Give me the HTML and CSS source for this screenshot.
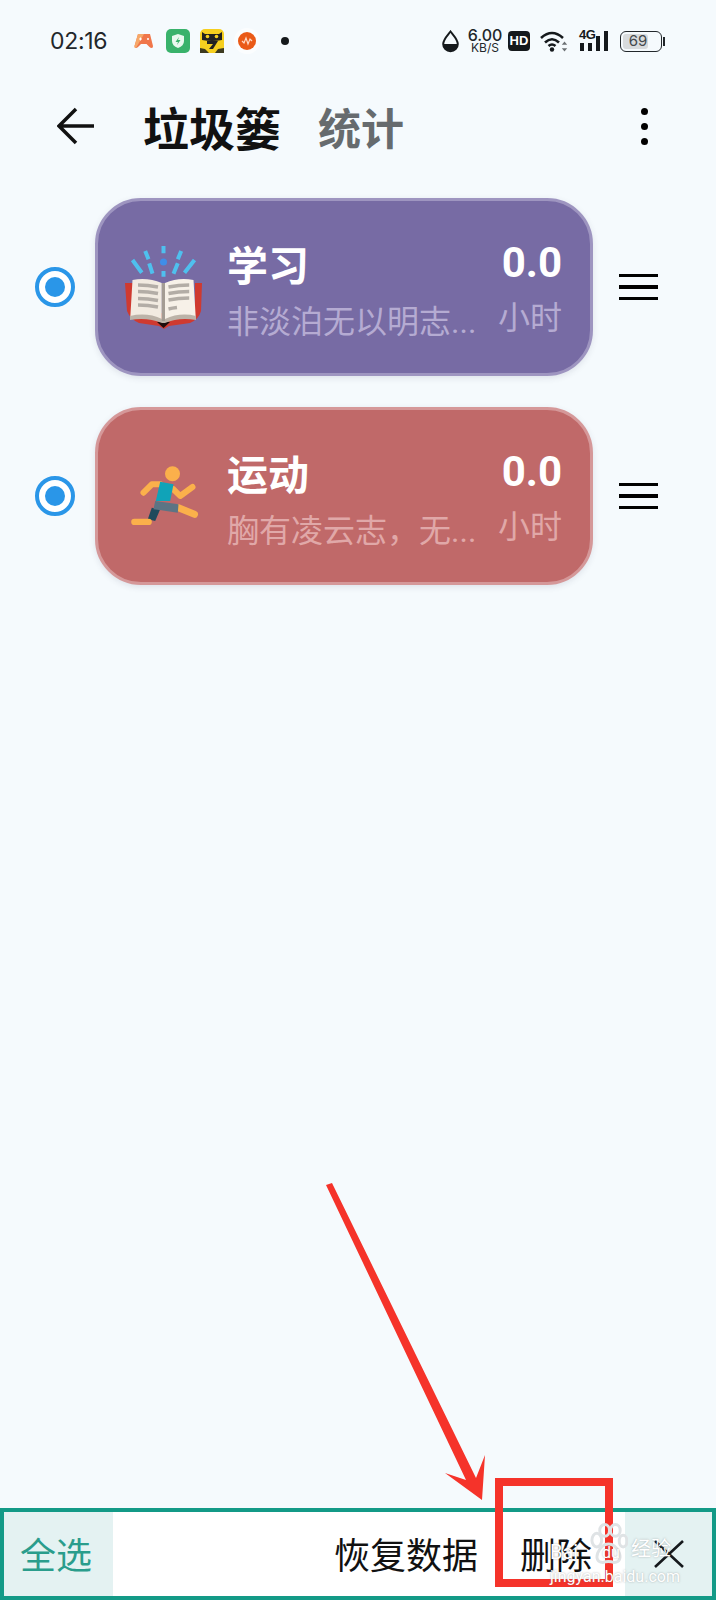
FILE: index.html
```html
<!DOCTYPE html>
<html lang="zh-CN">
<head>
  <meta charset="UTF-8">
  <meta name="viewport" content="width=device-width, initial-scale=1.0">
  <title>垃圾篓</title>
  <link rel="stylesheet" href="styles.css">
</head>
<body>
  <div class="page">
    <!-- status bar -->
    <div class="status-bar">
      <div class="clock">02:16</div>
      <div class="notify-icons">
        <svg class="ic-game" viewBox="0 0 20 16"><path d="M4 1h12l3 12q.3 2-1.500 2-1 0-2-1l-3-3H7l-3 3q-1 1-2 1-1.800 0-1.500-2z" fill="#f0764a"/><path d="M4 1h6L2 15q-1.800 0-1.500-2z" fill="#f6a869"/><path d="M5 6h3M6.500 4.500v3" stroke="#fff" stroke-width="1"/><circle cx="14" cy="6" r="1" fill="#fff"/></svg>
        <svg class="ic-app" viewBox="0 0 24 24"><rect width="24" height="24" rx="5" fill="#39b26b"/><path d="M12 5l6 2v5q0 5-6 7-6-2-6-7V7z" fill="#e8f8ee"/><path d="M13 8l-3.500 5H12l-1 3 3.500-5H12z" fill="#39b26b"/></svg>
        <svg class="ic-app" viewBox="0 0 24 24"><rect width="24" height="24" rx="5" fill="#f6cf1f"/><path d="M2 3l3 2h14l3-2v8q-5 1-10 1T2 11z" fill="#222"/><circle cx="7.500" cy="7.500" r="1.800" fill="#f6cf1f"/><circle cx="16.500" cy="7.500" r="1.800" fill="#f6cf1f"/><path d="M7 12h11l-5 8H9l4-5H7z" fill="#222"/><path d="M0 24v-5l5 1 4 4zM24 24v-5l-6 1-3 4z" fill="#3d3a20"/></svg>
        <svg class="ic-music" viewBox="0 0 26 26"><circle cx="13" cy="13" r="13" fill="#fbfdfe"/><circle cx="13" cy="13" r="9" fill="#ea5a17"/><path d="M8 13l2 2 2-5 2 6 2-5 2 2" fill="none" stroke="#ffd9c4" stroke-width="1.200"/></svg>
        <span class="notify-dot"></span>
      </div>
      <div class="sys-icons">
        <svg class="ic-drop" viewBox="0 0 17 23"><path d="M8.500 1.500C5 6 1.200 9.500 1.200 14a7.300 7.300 0 0 0 14.600 0C15.800 9.500 12 6 8.500 1.500z" fill="none" stroke="#15191c" stroke-width="2"/><path d="M1.500 14h14a7 7 0 0 1-14 0z" fill="#15191c"/></svg>
        <div class="speed"><span class="speed-num">6.00</span><span class="speed-unit">KB/S</span></div>
        <div class="hd">HD</div>
        <svg class="ic-wifi" viewBox="0 0 30 22"><path d="M1 8q11-10 22 0M5 12.500q7-6.500 14 0M8.500 16q3.500-3 7 0" fill="none" stroke="#15191c" stroke-width="2.600"/><circle cx="12" cy="19.500" r="2.200" fill="#15191c"/><path d="M24.500 11.500l2.700 3.200h-5.400zM24.500 21.500l2.700-3.200h-5.400z" fill="#6b7074"/></svg>
        <div class="signal">
          <span class="signal-label">4G</span>
          <svg class="ic-bars" viewBox="0 0 31 22"><rect x="1" y="13" width="4" height="8" fill="#15191c"/><rect x="9" y="13" width="4" height="8" fill="#15191c"/><rect x="17" y="6" width="4" height="15" fill="#15191c"/><rect x="25" y="1" width="4" height="20" fill="#15191c"/></svg>
        </div>
        <div class="battery"><div class="battery-fill"></div><span class="battery-num">69</span></div>
        <span class="battery-tip"></span>
      </div>
    </div>

    <!-- title bar -->
    <div class="nav-bar">
      <svg class="ic-back" viewBox="0 0 38 38"><path d="M37 19H2M19 2L2 19l17 17" fill="none" stroke="#111" stroke-width="3.500"/></svg>
      <div class="nav-title">垃圾篓</div>
      <div class="nav-tab">统计</div>
      <div class="more"><span></span><span></span><span></span></div>
    </div>

    <!-- list -->
    <div class="list">
      <div class="row">
        <div class="radio"></div>
        <div class="card card-study">
          <svg class="card-icon" viewBox="0 0 78 86">
            <path d="M0 39h8v30h62V39h7l-1 28q-2 8-11 12l-21 3-5 3-5-3-20-3q-9-4-12-12z" fill="#cf3a30"/>
            <path d="M32 78h13l-6.500 6z" fill="#1d0d0d"/>
            <path d="M7.500 36q15-3 29.300 3v38q-15-7-31.600-2z" fill="#f2ebe1"/>
            <path d="M68.500 36q-15-3-28.500 3v38q15-7 30.800-2z" fill="#f7f1e8"/>
            <path d="M5 72q17-4 32 3h3q15-7 31-3v4q-17-3-31 3h-3q-15-6-32-3z" fill="#bcb3a8"/>
            <path d="M36.800 39H40v38h-3.200z" fill="#a49c94"/>
            <g stroke="#b3ada6" stroke-width="3.500" fill="none">
              <path d="M13 41q10 0 20 2M13 47.500q10 0 20 2M13 54.500q10 0 20 2M13 61q10 0 20 2"/>
              <path d="M43.500 43q10-2 20.700-2M43.500 49.500q10-2 20.700-2M43.500 56q10-2 20.700-2M43.500 65q4-1 8.500-1.500"/>
            </g>
            <g stroke="#4fc0ee" stroke-width="4" fill="none">
              <path d="M38.500 2v7.300M38.500 27v5.700M20.200 7l3.300 8.300M56.200 7l-3.400 8.300M24.200 19.300l3.300 10.400M52.800 19.300l-4.300 10.400M7.500 16l9.300 12.700M69.500 16l-10 12.700"/>
            </g>
            <circle cx="38.500" cy="18" r="3.500" fill="#3f8ee8"/>
          </svg>
          <div class="card-text">
            <div class="card-name">学习</div>
            <div class="card-desc">非淡泊无以明志...</div>
          </div>
          <div class="card-time">
            <div class="card-hours">0.0</div>
            <div class="card-unit">小时</div>
          </div>
        </div>
        <div class="handle"><span></span><span></span><span></span></div>
      </div>

      <div class="row">
        <div class="radio"></div>
        <div class="card card-sport">
          <svg class="card-icon" viewBox="0 0 78 86">
            <circle cx="47.500" cy="20.700" r="7.500" fill="#fbb04b"/>
            <path d="M18.500 39.700l8.300-8.400h8.400M48.500 36.300l6.700 6.700 12.300-9" fill="none" stroke="#fbb04b" stroke-width="6" stroke-linecap="round" stroke-linejoin="round"/>
            <path d="M35.200 28.700l13.300 2.600L45.200 48H30.800z" fill="#10a3b8"/>
            <path d="M53.500 54.700l16 6.600" fill="none" stroke="#fbb04b" stroke-width="7" stroke-linecap="round"/>
            <path d="M26.800 54.700l8.400 1.600-5 11.700-7.400-1.700z" fill="#1f4a5c"/>
            <path d="M30.200 48l23.300 3.300-.7 8.400-16.600-2.400-7.700-1z" fill="#5c7484"/>
            <rect x="6.200" y="65.700" width="20.600" height="6.300" rx="3.100" fill="#fbb04b"/>
          </svg>
          <div class="card-text">
            <div class="card-name">运动</div>
            <div class="card-desc">胸有凌云志，无...</div>
          </div>
          <div class="card-time">
            <div class="card-hours">0.0</div>
            <div class="card-unit">小时</div>
          </div>
        </div>
        <div class="handle"><span></span><span></span><span></span></div>
      </div>
    </div>

    <!-- bottom actions -->
    <div class="action-bar">
      <div class="select-all">全选</div>
      <div class="actions">
        <span class="restore">恢复数据</span>
        <span class="delete">删除</span>
      </div>
      <div class="close">
        <svg viewBox="0 0 30 28"><path d="M1 1l28 26M29 1L1 27" fill="none" stroke="#15191c" stroke-width="2.600"/></svg>
      </div>
    </div>

    <!-- annotation drawn over the screenshot -->
    <svg class="mark-arrow" viewBox="0 0 170 330"><path d="M1 3l6-2 144 295 9-23-3 45-37-27 21 7z" fill="#f5332a"/></svg>
    <div class="mark-box"></div>
    <div class="watermark">
      <div class="wm-top">
        <span class="wm-bai">Bai</span>
        <svg class="wm-paw" viewBox="0 0 40 44"><g fill="none" stroke="#dfe3e5" stroke-width="3"><ellipse cx="8" cy="17" rx="5" ry="7"/><ellipse cx="16" cy="7" rx="5" ry="6"/><ellipse cx="27" cy="7" rx="5" ry="6"/><ellipse cx="35" cy="18" rx="4" ry="6"/><path d="M20 21q-7 0-11 9-3 9 5 10 6-2 12 0 8-1 5-10-4-9-11-9z"/></g></svg>
        <span class="wm-du">du</span>
        <span class="wm-name">经验</span>
      </div>
      <div class="wm-url">jingyan.baidu.com</div>
    </div>
  </div>
</body>
</html>
```

FILE: styles.css
```css
* {
  box-sizing: border-box;
}

body {
  margin: 0;
  padding: 0;
  background-color: #f5fafd;
  font-family: Roboto, "Noto Sans CJK SC", sans-serif;
  color: #111;
}

.page {
  position: relative;
  display: flex;
  flex-direction: column;
  width: 716px;
  height: 1600px;
  overflow: hidden;
}

/* status bar */
.status-bar {
  display: flex;
  align-items: center;
  height: 82px;
  padding-left: 50px;
}

.clock {
  width: 84px;
  font-family: Inter, sans-serif;
  font-size: 23px;
  letter-spacing: -0.3px;
  color: #22272b;
}

.notify-icons {
  display: flex;
  align-items: center;
}

.ic-game {
  width: 20px;
  height: 16px;
  margin-right: 12px;
}

.ic-app {
  width: 24px;
  height: 24px;
  margin-right: 10px;
}

.ic-music {
  width: 26px;
  height: 26px;
}

.notify-dot {
  width: 8px;
  height: 8px;
  margin-left: 21px;
  border-radius: 50%;
  background-color: #15191c;
}

.sys-icons {
  display: flex;
  align-items: center;
  margin-left: 153px;
}

.ic-drop {
  width: 17px;
  height: 23px;
}

.speed {
  display: flex;
  flex-direction: column;
  align-items: center;
  width: 36px;
  margin-left: 8px;
  font-family: Inter, sans-serif;
  color: #22272b;
}

.speed-num {
  font-size: 16px;
  line-height: 14px;
  font-weight: 500;
}

.speed-unit {
  font-size: 12px;
  line-height: 12px;
}

.hd {
  width: 22px;
  height: 20px;
  margin-left: 5px;
  border-radius: 4px;
  background-color: #15191c;
  color: #fff;
  font-family: "Liberation Sans", sans-serif;
  font-size: 13px;
  font-weight: bold;
  line-height: 20px;
  text-align: center;
}

.ic-wifi {
  width: 30px;
  height: 22px;
  margin-left: 10px;
}

.signal {
  position: relative;
  width: 31px;
  height: 22px;
  margin-left: 9px;
}

.signal-label {
  position: absolute;
  top: -2px;
  left: 0;
  font-family: "Liberation Sans", sans-serif;
  font-size: 13px;
  font-weight: bold;
  letter-spacing: -0.5px;
  line-height: 13px;
  color: #15191c;
}

.ic-bars {
  display: block;
  width: 31px;
  height: 22px;
}

.battery {
  position: relative;
  width: 42px;
  height: 21px;
  margin-left: 10px;
  padding: 2px;
  border: 1.500px solid #22272b;
  border-radius: 6px;
}

.battery-fill {
  width: 69%;
  height: 100%;
  border-radius: 3px;
  background-color: #d8dbdd;
}

.battery-num {
  position: absolute;
  top: 0;
  left: 0;
  width: 34px;
  font-family: Inter, sans-serif;
  font-size: 15px;
  line-height: 18px;
  text-align: center;
  color: #43484c;
}

.battery-tip {
  width: 2px;
  height: 9px;
  margin-left: 1px;
  background-color: #22272b;
}

/* title bar */
.nav-bar {
  display: flex;
  align-items: center;
  height: 88px;
  padding-left: 57px;
}

.ic-back {
  width: 38px;
  height: 38px;
}

.nav-title {
  margin-left: 48px;
  padding-top: 8px;
  font-size: 46px;
  font-weight: bold;
  line-height: 60px;
}

.nav-tab {
  margin-left: 37px;
  padding-top: 8px;
  font-size: 43px;
  font-weight: bold;
  line-height: 60px;
  color: #666b6e;
}

.more {
  display: flex;
  flex-direction: column;
  gap: 8px;
  margin-left: auto;
  margin-right: 68px;
}

.more span {
  width: 7px;
  height: 7px;
  border-radius: 50%;
  background-color: #000;
}

/* list */
.list {
  display: flex;
  flex-direction: column;
  flex: 1;
  gap: 31px;
  padding: 28px 0 0 35px;
}

.row {
  display: flex;
  align-items: center;
}

.radio {
  display: flex;
  align-items: center;
  justify-content: center;
  width: 40px;
  height: 40px;
  border: 4px solid #2a96e8;
  border-radius: 50%;
  background-color: #fff;
}

.radio::after {
  content: "";
  width: 20px;
  height: 20px;
  border-radius: 50%;
  background-color: #2a96e8;
}

.card {
  display: flex;
  align-items: center;
  width: 498px;
  height: 178px;
  margin-left: 20px;
  padding: 0 28px 0 27px;
  border: 3.500px solid;
  border-radius: 46px;
  box-shadow: 0 2px 6px rgba(60, 60, 90, 0.12);
  color: #fff;
}

.card-study {
  background-color: #776ba4;
  border-color: #9e95c0;
}

.card-study .card-desc,
.card-study .card-unit {
  color: #b5abd2;
}

.card-sport {
  background-color: #c06969;
  border-color: #d59899;
}

.card-sport .card-desc,
.card-sport .card-unit {
  color: #e0a8a8;
}

.card-icon {
  flex: none;
  width: 78px;
  height: 86px;
}

.card-text {
  flex: 1;
  margin-left: 24px;
  padding-top: 14px;
}

.card-name {
  font-size: 41px;
  font-weight: bold;
  line-height: 50px;
  margin-bottom: 5px;
}

.card-desc {
  font-size: 32px;
  line-height: 50px;
  white-space: nowrap;
}

.card-time {
  flex: none;
  padding-top: 7px;
  text-align: right;
}

.card-hours {
  font-size: 42px;
  font-weight: bold;
  line-height: 50px;
  margin-bottom: 5px;
}

.card-unit {
  font-size: 32px;
  line-height: 50px;
  white-space: nowrap;
}

.handle {
  display: flex;
  flex-direction: column;
  gap: 8px;
  width: 39px;
  margin-left: 26px;
}

.handle span {
  height: 3.500px;
  background-color: #000;
}

/* bottom actions */
.action-bar {
  display: flex;
  align-items: stretch;
  height: 92px;
  border: 4px solid #139a87;
}

.select-all {
  width: 109px;
  padding-left: 16px;
  background-color: #e4f2f2;
  color: #2a9d8c;
  font-size: 36px;
  line-height: 90px;
  overflow: hidden;
}

.actions {
  display: flex;
  flex: 1;
  justify-content: flex-end;
  background-color: #fff;
  font-size: 36px;
  line-height: 90px;
  overflow: hidden;
}

.delete {
  margin-left: 42px;
  margin-right: 33px;
}

.close {
  display: flex;
  align-items: center;
  justify-content: center;
  width: 87px;
  background-color: #e4f2f2;
}

.close svg {
  width: 30px;
  height: 28px;
}

/* annotation */
.mark-arrow {
  position: absolute;
  top: 1182px;
  left: 325px;
  width: 170px;
  height: 330px;
}

.mark-box {
  position: absolute;
  top: 1478px;
  left: 495px;
  width: 118px;
  height: 109px;
  border: 8px solid #f5332a;
}

.watermark {
  position: absolute;
  top: 1522px;
  left: 550px;
  width: 135px;
  color: #fff;
  text-shadow: 0 0 2px rgba(100, 100, 100, 0.5);
}

.wm-top {
  display: flex;
  align-items: flex-end;
  height: 45px;
}

.wm-bai {
  width: 41px;
  font-size: 20px;
  line-height: 30px;
}

.wm-paw {
  width: 39px;
  height: 44px;
  margin-left: -2px;
}

.wm-du {
  position: absolute;
  top: 21px;
  left: 52px;
  font-size: 16px;
  line-height: 20px;
}

.wm-name {
  margin-left: 3px;
  font-size: 20px;
  line-height: 36px;
}

.wm-url {
  margin-top: 1px;
  font-size: 16px;
  line-height: 18px;
  white-space: nowrap;
}
```
